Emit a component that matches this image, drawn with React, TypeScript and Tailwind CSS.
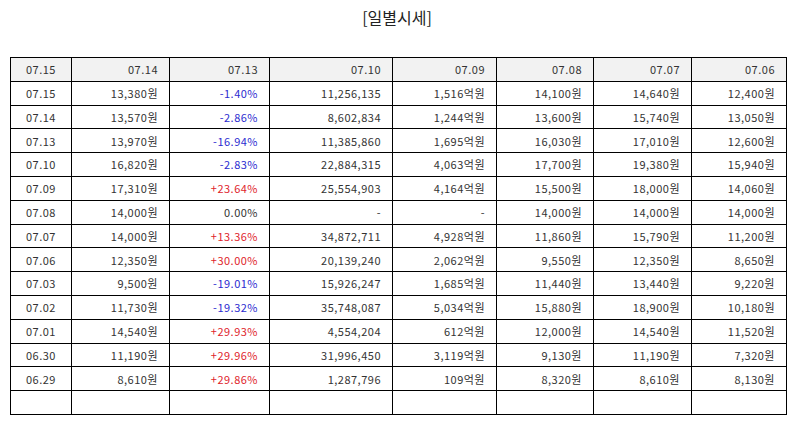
const ROWS: string[][] = [
  ["07.15", "13,380원", "-1.40%", "11,256,135", "1,516억원", "14,100원", "14,640원", "12,400원"],
  ["07.14", "13,570원", "-2.86%", "8,602,834", "1,244억원", "13,600원", "15,740원", "13,050원"],
  ["07.13", "13,970원", "-16.94%", "11,385,860", "1,695억원", "16,030원", "17,010원", "12,600원"],
  ["07.10", "16,820원", "-2.83%", "22,884,315", "4,063억원", "17,700원", "19,380원", "15,940원"],
  ["07.09", "17,310원", "+23.64%", "25,554,903", "4,164억원", "15,500원", "18,000원", "14,060원"],
  ["07.08", "14,000원", "0.00%", "-", "-", "14,000원", "14,000원", "14,000원"],
  ["07.07", "14,000원", "+13.36%", "34,872,711", "4,928억원", "11,860원", "15,790원", "11,200원"],
  ["07.06", "12,350원", "+30.00%", "20,139,240", "2,062억원", "9,550원", "12,350원", "8,650원"],
  ["07.03", "9,500원", "-19.01%", "15,926,247", "1,685억원", "11,440원", "13,440원", "9,220원"],
  ["07.02", "11,730원", "-19.32%", "35,748,087", "5,034억원", "15,880원", "18,900원", "10,180원"],
  ["07.01", "14,540원", "+29.93%", "4,554,204", "612억원", "12,000원", "14,540원", "11,520원"],
  ["06.30", "11,190원", "+29.96%", "31,996,450", "3,119억원", "9,130원", "11,190원", "7,320원"],
  ["06.29", "8,610원", "+29.86%", "1,287,796", "109억원", "8,320원", "8,610원", "8,130원"],
];

const HEADERS = ["07.15", "07.14", "07.13", "07.10", "07.09", "07.08", "07.07", "07.06"];
const WIDTHS = ["w-[61px]", "w-[98px]", "w-[100px]", "w-[123px]", "w-[104px]", "w-[97px]", "w-[98px]", "w-[95px]"];

function rateColor(v: string) {
  if (v.startsWith("+")) return "text-[#e0242b]";
  if (v.startsWith("-")) return "text-[#2b2bd0]";
  return "text-[#333]";
}

export default function App() {
  return (
    <div className="min-h-[425px] w-[794px] bg-white font-['Noto_Sans_CJK_KR','Noto_Sans',sans-serif] text-[#333]">
      <h2 className="pt-[5px] text-center text-[16px] leading-[24px] font-normal text-[#222]">[일별시세]</h2>

      <table className="mt-[28px] ml-[10px] w-[776px] table-fixed border-collapse text-[11px] tracking-[0.5px]">
        <colgroup>
          {WIDTHS.map((w, i) => (
            <col key={i} className={w} />
          ))}
        </colgroup>
        <thead>
          <tr className="h-[23.8px] bg-[#f2f2f2]">
            {HEADERS.map((h, i) => (
              <th
                key={i}
                className={`border border-black font-normal ${i === 0 ? "px-2 text-center" : "pr-[11px] pl-2 text-right"}`}
              >
                {h}
              </th>
            ))}
          </tr>
        </thead>
        <tbody>
          {ROWS.map((row, r) => (
            <tr key={r} className="h-[23.8px]">
              {row.map((cell, i) => (
                <td
                  key={i}
                  className={`border border-black ${i === 0 ? "px-2 text-center" : "pr-[11px] pl-2 text-right"} ${
                    i === 2 ? rateColor(cell) : ""
                  }`}
                >
                  {cell}
                </td>
              ))}
            </tr>
          ))}
          <tr className="h-[23.8px]">
            {HEADERS.map((_, i) => (
              <td key={i} className="border border-black" />
            ))}
          </tr>
        </tbody>
      </table>
    </div>
  );
}
